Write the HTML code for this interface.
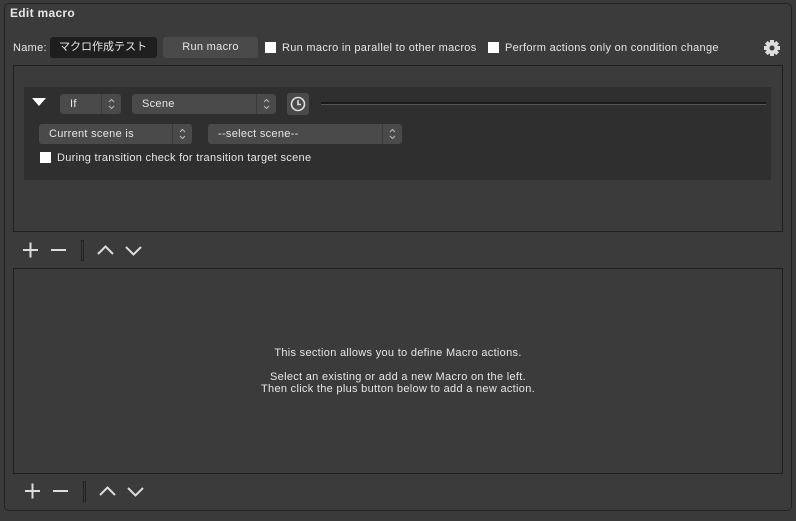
<!DOCTYPE html><html><head><style>
body{margin:0;width:796px;height:521px;background:#3a3a3a;font-family:"Liberation Sans","Noto Sans CJK JP",sans-serif;font-size:11px;letter-spacing:0.3px;color:#e6e6e6;position:relative;overflow:hidden}
.a{position:absolute}
.box{position:absolute;border:1px solid #1f1f1f}
.cb{position:absolute;width:11px;height:11px;background:#fff}
.combo{position:absolute;background:#4a4a4a;border-radius:3px;height:20px;line-height:20px}
.combo span{position:absolute;left:10px}
.combo svg{position:absolute;right:0;top:0;border-left:1px solid #3a3a3a}
</style></head><body>
<div class="a" style="left:4px;top:3px;width:786px;height:506px;border:1px solid #222;border-radius:5px;background:#3b3b3b"></div>
<div class="a" style="left:10px;top:6px;font-weight:bold;font-size:12px">Edit macro</div>
<div class="a" style="left:13px;top:42px">Name:</div>
<div class="a" style="left:50px;top:37px;width:107px;height:21px;background:#1e1e1e;border-radius:3px;line-height:21px;text-indent:9px;letter-spacing:0">マクロ作成テスト</div>
<div class="a" style="left:163px;top:37px;width:95px;height:21px;background:#4a4a4a;border-radius:3px;line-height:21px;text-align:center">Run macro</div>
<div class="cb" style="left:265px;top:42px"></div>
<div class="a" style="left:282px;top:42px">Run macro in parallel to other macros</div>
<div class="cb" style="left:488px;top:42px"></div>
<div class="a" style="left:505px;top:42px">Perform actions only on condition change</div>
<svg class="a" style="left:763px;top:39px" width="18" height="18" viewBox="0 0 18 18"><g fill="#ddd"><circle cx="9" cy="9" r="6"/><rect x="7" y="1" width="4" height="16"/><rect x="1" y="7" width="16" height="4"/><rect x="7" y="1" width="4" height="16" transform="rotate(45 9 9)"/><rect x="7" y="1" width="4" height="16" transform="rotate(-45 9 9)"/></g><circle cx="9" cy="9" r="2.5" fill="#3b3b3b"/></svg>
<div class="box" style="left:13px;top:65px;width:768px;height:165px;background:#3b3b3b"></div>
<div class="a" style="left:24px;top:87px;width:747px;height:93px;background:#2f2f2f"></div>
<svg class="a" style="left:32px;top:98px" width="14" height="9"><path d="M0 0H14L7 8Z" fill="#fff"/></svg>
<div class="combo" style="left:60px;top:94px;width:61px"><span>If</span><svg width="19" height="20"><path d="M7 8L9.5 5.5L12 8M7 12L9.5 14.5L12 12" fill="none" stroke="#bbb"/></svg></div>
<div class="combo" style="left:132px;top:94px;width:144px"><span>Scene</span><svg width="19" height="20"><path d="M7 8L9.5 5.5L12 8M7 12L9.5 14.5L12 12" fill="none" stroke="#bbb"/></svg></div>
<div class="a" style="left:287px;top:93px;width:22px;height:22px;background:#4a4a4a;border-radius:3px"></div>
<svg class="a" style="left:290px;top:96px" width="16" height="16"><circle cx="8" cy="8" r="6.5" fill="none" stroke="#ddd" stroke-width="1.6"/><path d="M8 4V8.5H11" fill="none" stroke="#ddd" stroke-width="1.6"/></svg>
<div class="a" style="left:321px;top:102px;width:445px;height:2px;background:#1a1a1a;border-bottom:1px solid #555"></div>
<div class="combo" style="left:39px;top:124px;width:153px"><span>Current scene is</span><svg width="19" height="20"><path d="M7 8L9.5 5.5L12 8M7 12L9.5 14.5L12 12" fill="none" stroke="#bbb"/></svg></div>
<div class="combo" style="left:208px;top:124px;width:194px"><span>--select scene--</span><svg width="19" height="20"><path d="M7 8L9.5 5.5L12 8M7 12L9.5 14.5L12 12" fill="none" stroke="#bbb"/></svg></div>
<div class="cb" style="left:40px;top:152px"></div>
<div class="a" style="left:57px;top:152px">During transition check for transition target scene</div>
<svg class="a" style="left:0;top:238px" width="160" height="24"><g stroke="#ddd" stroke-width="2" fill="none"><path d="M23 12H38M30.5 4.5V19.5"/><path d="M51 12H66"/><path d="M98 16L105.5 8.5L113 16"/><path d="M126 9L133.5 16.5L141 9"/></g><rect x="81" y="2" width="3" height="21" fill="#222"/><rect x="82" y="3" width="1" height="19" fill="#3b3b3b"/></svg>
<div class="box" style="left:13px;top:268px;width:768px;height:204px;background:#3b3b3b"></div>
<div class="a" style="left:13px;top:347px;width:770px;text-align:center;line-height:12px">This section allows you to define Macro actions.<br><br>Select an existing or add a new Macro on the left.<br>Then click the plus button below to add a new action.</div>
<svg class="a" style="left:2px;top:479px" width="160" height="24"><g stroke="#ddd" stroke-width="2" fill="none"><path d="M23 12H38M30.5 4.5V19.5"/><path d="M51 12H66"/><path d="M98 16L105.5 8.5L113 16"/><path d="M126 9L133.5 16.5L141 9"/></g><rect x="81" y="2" width="3" height="21" fill="#222"/><rect x="82" y="3" width="1" height="19" fill="#3b3b3b"/></svg>
</body></html>
